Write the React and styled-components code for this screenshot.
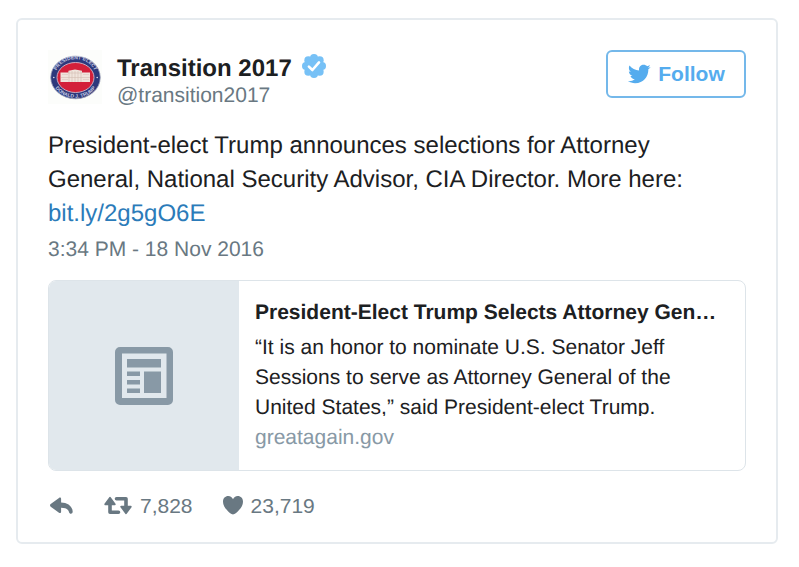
import React from 'react';
import styled, { createGlobalStyle } from 'styled-components';

const GlobalStyle = createGlobalStyle`
  *, *::before, *::after { box-sizing: border-box; }
  body {
    margin: 0;
    background: #fff;
    color: #1c2022;
    font-family: "Liberation Sans", Arial, Helvetica, sans-serif;
    text-rendering: geometricPrecision;
  }
  p, h2 { margin: 0; }
  svg { display: block; flex: none; }
`;

const Page = styled.main`
  padding: 18px 21px 24px 16px;
`;

const Tweet = styled.article`
  padding: 30px;
  padding-bottom: 21px;
  border: 2px solid #e6ebef;
  border-radius: 6px;
`;

const Header = styled.header`
  display: flex;
  align-items: flex-start;
  justify-content: space-between;
`;

const Author = styled.a`
  display: flex;
  gap: 15px;
  color: inherit;
  text-decoration: none;
`;

const Names = styled.span`
  display: flex;
  flex-direction: column;
  padding-top: 4px;
`;

const Name = styled.span`
  display: flex;
  align-items: flex-start;
  gap: 10px;
  font-size: 24px;
  line-height: 30px;
  font-weight: 700;
`;

const Handle = styled.span`
  font-size: 21px;
  line-height: 24px;
  color: #697882;
`;

const FollowButton = styled.button`
  display: flex;
  align-items: center;
  justify-content: center;
  gap: 7px;
  width: 140px;
  height: 48px;
  padding: 0;
  border: 2px solid #74b8ea;
  border-radius: 6px;
  background: #fff;
  color: #55acee;
  font: 700 21px "Liberation Sans", Arial, sans-serif;
  cursor: pointer;
`;

const Message = styled.p`
  margin-top: 21px;
  font-size: 24px;
  line-height: 34px;
`;

const TextLink = styled.a`
  color: #2b7bb9;
  text-decoration: none;
`;

const Timestamp = styled.time`
  display: block;
  margin-top: 4px;
  font-size: 21px;
  line-height: 30px;
  color: #697882;
`;

const LinkCard = styled.a`
  display: flex;
  margin-top: 15px;
  border: 1px solid #dde4e9;
  border-radius: 8px;
  overflow: hidden;
  color: inherit;
  text-decoration: none;
`;

const Thumbnail = styled.span`
  flex: none;
  display: grid;
  place-items: center;
  width: 190px;
  background: #e1e8ed;
`;

const Summary = styled.span`
  display: flex;
  flex-direction: column;
  min-width: 0;
  padding: 17px 20px 17px 16px;
  font-size: 21px;
  line-height: 30px;
`;

const SummaryTitle = styled.strong`
  overflow: hidden;
  white-space: nowrap;
  text-overflow: ellipsis;
`;

const Description = styled.span`
  max-height: 83px;
  margin: 5px 0 7px;
  overflow: hidden;
`;

const Domain = styled.span`
  color: #8899a6;
`;

const Actions = styled.footer`
  display: flex;
  align-items: center;
  gap: 30px;
  margin-top: 20px;
`;

const Action = styled.button`
  display: flex;
  align-items: center;
  gap: 8px;
  padding: 0;
  border: 0;
  background: none;
  color: #697882;
  font: 21px/30px "Liberation Sans", Arial, sans-serif;
  cursor: pointer;
`;

function Seal() {
  return (
    <svg width="54" height="54" viewBox="0 0 54 54" role="img" aria-label="President Elect Donald J. Trump seal">
      <rect width="54" height="54" fill="#fcfdfb" />
      <ellipse cx="27.5" cy="27.5" rx="24.8" ry="21.3" fill="#2d397c" stroke="#a6a9bd" strokeWidth="0.8" />
      <ellipse cx="27.5" cy="27.5" rx="18.5" ry="15" fill="#d3203a" stroke="#d6b8c9" strokeWidth="0.9" />
      <path id="seal-top" d="M7.700 25.500a19.800 16.300 0 0 1 39.600 0" fill="none" />
      <path id="seal-bottom" d="M4.400 28.500a23.100 19.300 0 0 0 46.200 0" fill="none" />
      <g fill="#c5cbe3" fontFamily="Liberation Sans" fontWeight="700" fontSize="5" textAnchor="middle">
        <text><textPath href="#seal-top" startOffset="50%">PRESIDENT ELECT</textPath></text>
        <text><textPath href="#seal-bottom" startOffset="50%">DONALD J. TRUMP</textPath></text>
      </g>
      <circle cx="5.800" cy="27.5" r="0.8" fill="#dce0ee" />
      <circle cx="49.2" cy="27.5" r="0.8" fill="#dce0ee" />
      <path d="M12.500 22.500h8v-1.800l6.500-1.200 7 1.200v1.800h8v9.500h-29.500z" fill="#f0e4dc" />
      <path d="M20 23h14M13 27.500h29M21 21v11M24 21v11M27 21v11M30 21v11M33 21v11" stroke="#d3bdb4" strokeWidth="0.6" />
      <path d="M14.500 24.500h5M14.500 29.500h5M35.500 24.500h5M35.500 29.500h5" stroke="#d8c0b8" strokeWidth="1.200" strokeDasharray="1 1" />
    </svg>
  );
}

const lobes = Array.from({ length: 8 }, (_, i) => {
  const a = (i * Math.PI) / 4;
  return [12 + 8 * Math.cos(a), 12 + 8 * Math.sin(a)];
});

function VerifiedBadge() {
  return (
    <svg width="24" height="24" viewBox="0 0 24 24" role="img" aria-label="Verified account">
      <g fill="#77c1f6">
        <circle cx="12" cy="12" r="9" />
        {lobes.map(([x, y], i) => <circle key={i} cx={x} cy={y} r="4" />)}
      </g>
      <path d="M6.900 12.600l3.500 3.400 6.600-7.600" fill="none" stroke="#fff" strokeWidth="2.600" strokeLinecap="round" strokeLinejoin="round" />
    </svg>
  );
}

function Bird() {
  return (
    <svg width="24" height="24" viewBox="0 0 24 24" fill="currentColor" aria-hidden="true">
      <path d="M23.643 4.937c-.835.37-1.732.62-2.675.733.962-.576 1.7-1.49 2.048-2.578-.9.534-1.897.922-2.958 1.13-.85-.904-2.06-1.47-3.4-1.47-2.572 0-4.658 2.086-4.658 4.66 0 .364.042.718.12 1.06-3.873-.195-7.304-2.05-9.602-4.868-.4.69-.63 1.49-.63 2.342 0 1.616.823 3.043 2.072 3.878-.764-.025-1.482-.234-2.11-.583v.06c0 2.257 1.605 4.14 3.737 4.568-.392.106-.803.162-1.227.162-.3 0-.593-.028-.877-.082.593 1.85 2.313 3.198 4.352 3.234-1.595 1.25-3.604 1.995-5.786 1.995-.376 0-.747-.022-1.112-.065 2.062 1.323 4.51 2.093 7.14 2.093 8.57 0 13.255-7.098 13.255-13.254 0-.2-.005-.402-.014-.602.91-.658 1.7-1.477 2.323-2.41z" />
    </svg>
  );
}

function ArticleIcon() {
  return (
    <svg width="58" height="58" viewBox="0 0 58 58" aria-hidden="true">
      <path fill="#8899a6" fillRule="evenodd" d="M5 0h48a5 5 0 0 1 5 5v48a5 5 0 0 1-5 5H5a5 5 0 0 1-5-5V5a5 5 0 0 1 5-5zM7 6.500v44.500h44.500V6.500zM12 12h34v8.500H12zM12 24.500h13v4.500H12zM12 33h13v4.500H12zM12 41.500h13v4.500H12zM29 24.500h17V46H29z" />
    </svg>
  );
}

function ReplyIcon() {
  return (
    <svg width="26" height="20" viewBox="0 0 26 20" fill="currentColor" aria-hidden="true">
      <path d="M2.700 8L11 1.900C12 1.200 13.100 1.700 13.100 2.900V6.400C19.500 6.600 24.500 10 24.700 15.700C24.700 18.200 21.500 18.300 21.100 16.200C20.500 13.100 17.500 11.800 13.100 11.700V15.700C13.100 17 12 17.500 11 16.700L2.700 10.700C1.800 10 1.800 8.700 2.700 8Z" />
    </svg>
  );
}

function RetweetIcon() {
  return (
    <svg width="28" height="20" viewBox="0 0 28 20" aria-hidden="true">
      <path d="M6 7v9.300H14.500M12.500 2.700h9.500V12" fill="none" stroke="currentColor" strokeWidth="3.600" strokeLinecap="round" strokeLinejoin="round" />
      <path d="M6 1.700L1.200 8.300h9.600zM22 17.300L17.200 10.700h9.600z" fill="currentColor" stroke="currentColor" strokeWidth="1.800" strokeLinejoin="round" />
    </svg>
  );
}

function HeartIcon() {
  return (
    <svg width="20" height="20" viewBox="0 0 20 20" fill="currentColor" aria-hidden="true">
      <path d="M10 18.500C8 18.500 0 12 0 5.700C0 2.200 2.300 0 5.200 0C7.600 0 9.200 1.500 10 3.200C10.800 1.500 12.400 0 14.800 0C17.700 0 20 2.200 20 5.700C20 12 12 18.500 10 18.500Z" />
    </svg>
  );
}

export default function App() {
  return (
    <Page>
      <GlobalStyle />
      <Tweet>
        <Header>
          <Author href="#transition2017">
            <Seal />
            <Names>
              <Name>Transition 2017 <VerifiedBadge /></Name>
              <Handle>@transition2017</Handle>
            </Names>
          </Author>
          <FollowButton type="button"><Bird />Follow</FollowButton>
        </Header>
        <Message>
          President-elect Trump announces selections for Attorney General, National
          Security Advisor, CIA Director. More here: <TextLink href="#link">bit.ly/2g5gO6E</TextLink>
        </Message>
        <Timestamp dateTime="2016-11-18T15:34">3:34 PM - 18 Nov 2016</Timestamp>
        <LinkCard href="#article">
          <Thumbnail><ArticleIcon /></Thumbnail>
          <Summary>
            <SummaryTitle>President-Elect Trump Selects Attorney General</SummaryTitle>
            <Description>
              “It is an honor to nominate U.S. Senator Jeff Sessions to serve as Attorney
              General of the United States,” said President-elect Trump.
            </Description>
            <Domain>greatagain.gov</Domain>
          </Summary>
        </LinkCard>
        <Actions>
          <Action type="button" aria-label="Reply"><ReplyIcon /></Action>
          <Action type="button" aria-label="Retweet, 7,828"><RetweetIcon />7,828</Action>
          <Action type="button" aria-label="Like, 23,719"><HeartIcon />23,719</Action>
        </Actions>
      </Tweet>
    </Page>
  );
}
